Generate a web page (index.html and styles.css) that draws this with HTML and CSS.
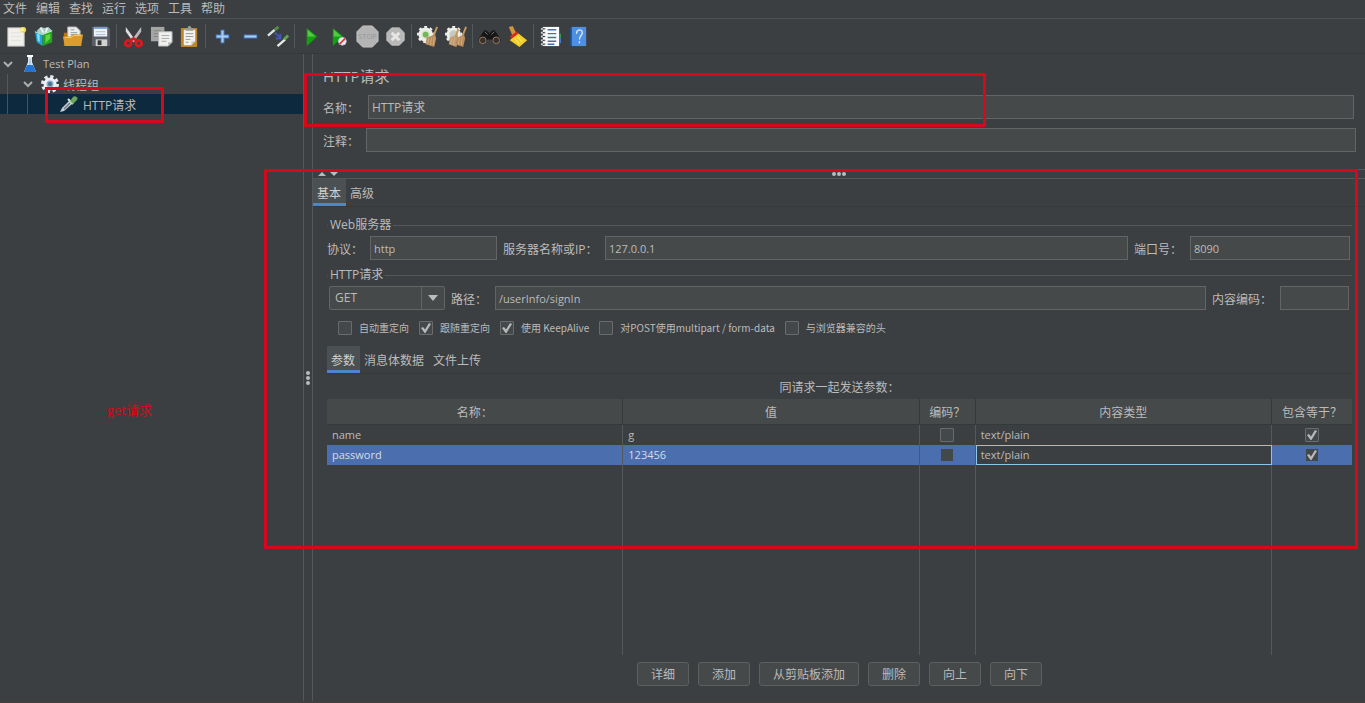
FILE: index.html
```html
<!DOCTYPE html>
<html lang="zh-CN">
<head>
<meta charset="utf-8">
<title>HTTP请求</title>
<link rel="stylesheet" href="styles.css">
</head>
<body>
<div class="app">
  <nav class="menubar">
    <button class="menu">文件</button><button class="menu">编辑</button><button class="menu">查找</button><button class="menu">运行</button><button class="menu">选项</button><button class="menu">工具</button><button class="menu">帮助</button>
  </nav>

  <div class="toolbar">
    <button class="tool" aria-label="新建"><svg viewBox="0 0 24 24"><rect x="3" y="3" width="17" height="19" fill="#f1f0ec" stroke="#c9c8c2"/><path d="M6 8h11M6 12h11M6 16h11" stroke="#e4e3de"/><circle cx="19" cy="5" r="3" fill="#f3dc4c"/><circle cx="18" cy="5" r="1.500" fill="#fff6b0"/></svg></button>
    <button class="tool" aria-label="模板"><svg viewBox="0 0 24 24"><path d="M4 6l4-4 4 1 4-1 4 4-4 4H6z" fill="#a9c9c4"/><path d="M8 3l3 5M15 3l-2 5" stroke="#e9f4f0" stroke-width="2"/><path d="M2 7l8 3v12l-6-4z" fill="#1fa6dd"/><path d="M4 9l3 1v8l-2-2z" fill="#8edcf5"/><path d="M10 10l10-4v12l-10 4z" fill="#25a51f"/><path d="M13 11l5-2v5l-5 5z" fill="#62d443"/><path d="M2 7l8 3 10-4" fill="none" stroke="#c9f0cf"/></svg></button>
    <button class="tool" aria-label="打开"><svg viewBox="0 0 24 24"><path d="M3 8h5l2 3h11v11H3z" fill="#ba7410"/><path d="M7 2h9l4 4v8H7z" fill="#eeeeec" stroke="#aaa"/><path d="M10 5h4M10 8h7M10 10h7" stroke="#8b98a8"/><path d="M2 12h8l2-2h11l-2 12H4z" fill="#dc9c2b"/><path d="M4 13h7l2-2h8" fill="none" stroke="#f8cc65"/></svg></button>
    <button class="tool" aria-label="保存"><svg viewBox="0 0 24 24"><path d="M3 2h17l2 2v18H3z" fill="#585d66"/><rect x="5" y="2" width="14" height="10" fill="#eef4fa"/><path d="M5 3h14" stroke="#7399cf" stroke-width="2"/><path d="M7 7h10M7 10h10" stroke="#a9bdd4"/><rect x="7" y="15" width="12" height="7" fill="#d2d2d0"/><rect x="9" y="16" width="4" height="5" fill="#34373b"/></svg></button>
    <span class="tool-sep"></span>
    <button class="tool" aria-label="剪切"><svg viewBox="0 0 24 24"><path d="M4 2l10 14-2 2L4 7z" fill="#dcdedb"/><path d="M20 2L10 16l2 2 8-11z" fill="#b9bcba"/><g fill="none" stroke="#d81920" stroke-width="3"><ellipse cx="6.500" cy="19" rx="3" ry="3"/><ellipse cx="17.500" cy="19" rx="3" ry="3"/><path d="M9 16l3-2 3 2"/></g></svg></button>
    <button class="tool" aria-label="复制"><svg viewBox="0 0 24 24"><rect x="1" y="2" width="14" height="15" fill="#a5a6a4"/><path d="M4 6h8M4 9h5M4 12h5" stroke="#838584"/><path d="M9 7h14v11l-4 4H9z" fill="#f0f0ee" stroke="#b5b6b5"/><path d="M12 11h8M12 14h8M12 17h5" stroke="#aaa"/><path d="M23 18h-4v4z" fill="#b6b7b4"/></svg></button>
    <button class="tool" aria-label="粘贴"><svg viewBox="0 0 24 24"><rect x="3" y="3" width="17" height="20" rx="1" fill="#bd8629"/><path d="M6 5h12v12l-4 4H6z" fill="#f3f2ef"/><path d="M8 9h8M8 12h8M8 15h5M8 18h3" stroke="#999"/><path d="M8 3h2l1-2h2l1 2h2v3H8z" fill="#999d91"/><path d="M18 17h-4v4z" fill="#c8c8c4"/></svg></button>
    <span class="tool-sep"></span>
    <button class="tool" aria-label="展开"><svg viewBox="0 0 24 24"><path d="M12 5v14M5 12h14" stroke="#4d86d0" stroke-width="4"/><path d="M12 6v12M6 12h12" stroke="#a9ccf5" stroke-width="2"/></svg></button>
    <button class="tool" aria-label="折叠"><svg viewBox="0 0 24 24"><path d="M5 12h14" stroke="#4d86d0" stroke-width="4"/><path d="M6 12h12" stroke="#a9ccf5" stroke-width="2"/></svg></button>
    <button class="tool" aria-label="切换"><svg viewBox="0 0 24 24"><path d="M1 11l7-6" stroke="#dbe5e2" stroke-width="2.500"/><path d="M8 5l4-3" stroke="#538f48" stroke-width="3"/><path d="M11 22l8-7" stroke="#e5eae4" stroke-width="2.500"/><path d="M18 15l4-4" stroke="#62a351" stroke-width="3"/><path d="M8 8l6 5M14 9v5H9" fill="none" stroke="#4256b4" stroke-width="2"/></svg></button>
    <span class="tool-sep"></span>
    <button class="tool" aria-label="启动"><svg viewBox="0 0 24 24"><path d="M7 3l11 9-11 10z" fill="#13a112"/><path d="M8 5l8 7H8z" fill="#54c946"/></svg></button>
    <button class="tool" aria-label="不停顿开始"><svg viewBox="0 0 24 24"><path d="M5 3l11 9-11 10z" fill="#13a112"/><path d="M6 5l8 7H6z" fill="#54c946"/><circle cx="15" cy="17" r="4" fill="#eee" stroke="#bccbe2"/><path d="M12 20l6-6" stroke="#d83f48" stroke-width="2"/></svg></button>
    <button class="tool" aria-label="停止"><svg viewBox="0 0 24 24"><path d="M7 1h10l6 6v10l-6 6H7l-6-6V7z" fill="#b4b4b4" stroke="#c5c5c5"/><text class="stop-word" x="12" y="15" text-anchor="middle">STOP</text></svg></button>
    <button class="tool" aria-label="关闭"><svg viewBox="0 0 24 24"><path d="M8 3h8l5 5v8l-5 5H8l-5-5V8z" fill="#b8b8b8" stroke="#c7c7c7"/><path d="M8 8l8 8M16 8l-8 8" stroke="#e6e6e6" stroke-width="3"/></svg></button>
    <span class="tool-sep"></span>
    <button class="tool" aria-label="清除"><svg viewBox="0 0 24 24"><circle cx="9" cy="10" r="6" fill="#d7e2cf" stroke="#ecefea" stroke-width="3"/><circle cx="9" cy="10" r="8" fill="none" stroke="#f0f0ed" stroke-width="2" stroke-dasharray="3 3"/><circle cx="9" cy="10" r="3" fill="#6fba55"/><path d="M21 2l-4 10" stroke="#c79a62" stroke-width="2"/><path d="M10 13l9-3 1 4-2 9-9-3z" fill="#b88b5b"/><path d="M12 14l-1 6M15 13l-1 8M18 12l-1 9" stroke="#d4b082"/></svg></button>
    <button class="tool" aria-label="清除全部"><svg viewBox="0 0 24 24"><circle cx="9" cy="10" r="6" fill="#c6c9c0" stroke="#ecefea" stroke-width="3"/><circle cx="9" cy="10" r="8" fill="none" stroke="#f0f0ed" stroke-width="2" stroke-dasharray="3 3"/><path d="M14 4l-3 8M22 2l-4 10" stroke="#c79a62" stroke-width="2"/><path d="M5 13l8-3 1 4-2 9-8-3z" fill="#c09a70"/><path d="M13 13l7-3 1 4-2 9-8-3z" fill="#b88b5b"/><path d="M7 13l-1 7M10 12l-1 9M15 13l-1 8M18 12l-1 9" stroke="#d4b082"/></svg></button>
    <span class="tool-sep"></span>
    <button class="tool" aria-label="查找"><svg viewBox="0 0 24 24"><path d="M7 5l4 2 1 3 1-3 4-2 3 4 4 7-7 4-3-5h-4l-3 5-7-4 4-7z" fill="#171717"/><circle cx="5" cy="16" r="3.500" fill="#37312e" stroke="#9f7860"/><circle cx="19" cy="16" r="3.500" fill="#37312e" stroke="#9f7860"/><path d="M7 7l3 3M17 7l-3 3" stroke="#777"/></svg></button>
    <button class="tool" aria-label="重置查找"><svg viewBox="0 0 24 24"><path d="M3 2l4-1 4 8-4 3z" fill="#d3943d"/><path d="M12 8l10 8-8 7-10-7z" fill="#f3ce28"/><path d="M12 12l5 6M9 14l5 6" stroke="#fff080"/><path d="M5 13l7-5" stroke="#d62d1f" stroke-width="3"/></svg></button>
    <span class="tool-sep"></span>
    <button class="tool" aria-label="函数助手"><svg viewBox="0 0 24 24"><rect x="4" y="2" width="17" height="20" fill="#fafafa"/><path d="M9 5h9M9 9h9M9 13h9M9 17h9M9 20h7" stroke="#4670b3" stroke-width="1.500"/><path d="M2 4h5M2 8h5M2 12h5M2 16h5M2 20h5" stroke="#ccc" stroke-width="2"/><path d="M4 4h2M4 8h2M4 12h2M4 16h2M4 20h2" stroke="#222"/><path d="M22 9v5" stroke="#2b9a57" stroke-width="2"/><path d="M22 14v5" stroke="#3d79cf" stroke-width="2"/></svg></button>
    <button class="tool" aria-label="帮助"><svg viewBox="0 0 24 24"><path d="M3 3l3-1v21l-3-2z" fill="#214f88"/><rect x="5" y="2" width="15" height="20" fill="#4d8fe0"/><path d="M10 9c0-5 6-5 6-1 0 3-3 3-3 7M13 17v2" fill="none" stroke="#d4e6ff" stroke-width="1.500"/></svg></button>
  </div>

  <main class="workspace">
    <aside class="sidebar">
      <div class="tree-row"><svg class="chevron" viewBox="0 0 10 10"><path d="M1 3l4 4 4-4"/></svg><svg class="node-icon" viewBox="0 0 18 18"><path d="M7 1h4v6l4 10H3L7 7z" fill="#d9e6f1"/><path d="M6 10h6l3 7H3z" fill="#2274d5"/><path d="M6 1h6" stroke="#fff" stroke-width="2"/><path d="M9 4v6" stroke="#94b4cf"/></svg><span class="latin">Test Plan</span></div>
      <div class="tree-row level-1"><svg class="chevron" viewBox="0 0 10 10"><path d="M1 3l4 4 4-4"/></svg><svg class="node-icon" viewBox="0 0 18 18"><circle cx="9" cy="9" r="7" fill="none" stroke="#e4e9ef" stroke-width="4" stroke-dasharray="3 2.500"/><circle cx="9" cy="9" r="5" fill="#8baacb" stroke="#edf1f4" stroke-width="3"/><circle cx="9" cy="9" r="2" fill="#4f6b8d"/></svg><span class="node-name">线程组</span></div>
      <div class="tree-row level-2 selected"><svg class="node-icon" viewBox="0 0 18 18"><path d="M0 17l2-4 7-7 3 3-8 7z" fill="#c4ced4"/><path d="M4 14l6-6" stroke="#6b7780" stroke-width="1.500"/><path d="M8 4l5 5" stroke="#d6ebce" stroke-width="2"/><path d="M10 6l3-4c2-2 6 1 4 3l-4 4z" fill="#6ba75b"/></svg><span class="node-name">HTTP请求</span></div>
      <p class="note">get请求</p>
    </aside>
    <div class="split-v"><svg viewBox="0 0 4 14"><circle cx="2" cy="2" r="2"/><circle cx="2" cy="7" r="2"/><circle cx="2" cy="12" r="2"/></svg></div>

    <section class="editor">
      <header class="element">
        <h1>HTTP请求</h1>
        <div class="element-row name-row"><label for="name">名称：</label><input class="field" id="name" type="text" value="HTTP请求"></div>
        <div class="element-row"><label for="comment">注释：</label><input class="field" id="comment" type="text"></div>
      </header>
      <div class="split-h"><svg class="arrows" viewBox="0 0 20 6"><path d="M0 5l4-4 4 4zM12 1l4 4 4-4z"/></svg><svg class="dots" viewBox="0 0 14 4"><circle cx="2" cy="2" r="2"/><circle cx="7" cy="2" r="2"/><circle cx="12" cy="2" r="2"/></svg></div>
      <div class="tabs"><button class="tab active">基本</button><button class="tab">高级</button></div>

      <div class="request">
        <fieldset class="group">
          <legend>Web服务器</legend>
          <div class="server-row">
            <label for="protocol">协议：</label><input class="field latin" id="protocol" type="text" value="http">
            <label for="host">服务器名称或IP：</label><input class="field latin" id="host" type="text" value="127.0.0.1">
            <label for="port">端口号：</label><input class="field latin" id="port" type="text" value="8090">
          </div>
        </fieldset>
        <fieldset class="group">
          <legend>HTTP请求</legend>
          <div class="path-row">
            <div class="select-box"><select class="method" aria-label="方法"><option>GET</option><option>POST</option></select><svg viewBox="0 0 10 6"><path d="M0 0h10L5 6z"/></svg></div>
            <label for="path">路径：</label><input class="field latin" id="path" type="text" value="/userInfo/signIn">
            <label for="encoding">内容编码：</label><input class="field latin" id="encoding" type="text">
          </div>
          <div class="options">
            <label><input type="checkbox">自动重定向</label>
            <label><input type="checkbox" checked>跟随重定向</label>
            <label><input type="checkbox" checked>使用 KeepAlive</label>
            <label><input type="checkbox">对POST使用multipart / form-data</label>
            <label><input type="checkbox">与浏览器兼容的头</label>
          </div>
        </fieldset>

        <div class="tabs inner"><button class="tab active">参数</button><button class="tab">消息体数据</button><button class="tab">文件上传</button></div>
        <h2>同请求一起发送参数：</h2>
        <div class="table-area">
          <table>
            <colgroup><col><col><col class="col-encode"><col><col class="col-equals"></colgroup>
            <thead><tr><th>名称：</th><th>值</th><th>编码？</th><th>内容类型</th><th>包含等于？</th></tr></thead>
            <tbody>
              <tr><td>name</td><td>g</td><td class="check"><input type="checkbox" aria-label="编码"></td><td>text/plain</td><td class="check"><input type="checkbox" aria-label="包含等于" checked></td></tr>
              <tr class="picked"><td>password</td><td>123456</td><td class="check"><input type="checkbox" aria-label="编码"></td><td class="focused">text/plain</td><td class="check"><input type="checkbox" aria-label="包含等于" checked></td></tr>
              <tr class="filler"><td></td><td></td><td></td><td></td><td></td></tr>
            </tbody>
          </table>
        </div>
        <div class="actions"><button>详细</button><button>添加</button><button>从剪贴板添加</button><button>删除</button><button>向上</button><button>向下</button></div>
      </div>
    </section>
  </main>

  <div class="mark mark-tree"></div>
  <div class="mark mark-name"></div>
  <div class="mark mark-request"></div>
</div>
</body>
</html>
```
FILE: styles.css
```css
* { box-sizing: border-box; }

body {
  margin: 0;
  background: #3c3f41;
  color: #bbbbbb;
  font: 12px/16px "Open Sans", "Noto Sans CJK SC", sans-serif;
}

button, input, select { font: inherit; color: inherit; margin: 0; }
button { background: none; border: 0; padding: 0; }

.app {
  position: relative;
  display: flex;
  flex-direction: column;
  min-height: 100vh;
  border-bottom: 2px solid #443d3e;
}

.menubar {
  display: flex;
  gap: 9px;
  height: 19px;
  padding: 0 3px;
  border-bottom: 1px solid #515151;
}

.toolbar {
  display: flex;
  align-items: center;
  height: 35px;
  padding: 0 2px;
  border-bottom: 1px solid #36393a;
}
.tool { display: flex; justify-content: center; width: 28px; }
.tool svg { width: 23px; height: 23px; }
.tool-sep { width: 1px; height: 24px; margin: 0 2px; background: #55585a; }
.stop-word { font-size: 8px; fill: #989898; }

.workspace { display: flex; flex: 1; }

.sidebar { width: 303px; }
.tree-row { display: flex; align-items: center; height: 20px; padding-left: 3px; }
.level-1 {
  padding-left: 23px;
  background: linear-gradient(#55585a, #55585a) 7px 0 / 1px 100% no-repeat;
}
.level-2 { padding-left: 60px; }
.selected {
  background:
    linear-gradient(#45535e, #45535e) 7px 0 / 1px 100% no-repeat,
    linear-gradient(#45535e, #45535e) 27px 0 / 1px 100% no-repeat,
    #0d293e;
}
.chevron { width: 10px; height: 10px; margin-right: 8px; fill: none; stroke: #adadad; stroke-width: 2; }
.node-icon { width: 18px; height: 18px; margin-right: 4px; }
.node-name { padding-top: 3px; }
.level-2 .node-icon { margin-right: 5px; }
.note { margin: 288px 0 0 107px; color: #d5091b; font-size: 13px; }

.latin, td { font-size: 11px; }

.split-v {
  display: flex;
  align-items: center;
  justify-content: center;
  width: 10px;
  border: solid #55585a;
  border-width: 0 1px;
}
.split-v svg { width: 4px; height: 14px; fill: #bbbbbb; }

.editor { display: flex; flex: 1; flex-direction: column; min-width: 0; }
.element { display: flex; flex-direction: column; gap: 9px; padding: 12px 9px 17px 10px; }
h1 { margin: 0; font-size: 15px; line-height: 20px; font-weight: 400; }
.element-row { display: flex; align-items: center; }
.element-row label { width: 43px; }
.name-row { padding-right: 2px; }
.name-row label { width: 45px; }
.element-row .field { flex: 1; }
.element-row label, .server-row label, .path-row label { padding-top: 3px; }

.field {
  min-width: 0;
  height: 24px;
  padding: 0 3px;
  background: #45494a;
  border: 1px solid #646464;
  border-radius: 0;
}

.split-h {
  display: grid;
  grid-template-columns: 1fr auto 1fr;
  align-items: center;
  height: 10px;
  border: solid #55585a;
  border-width: 1px 0;
}
.arrows { width: 20px; height: 6px; margin-left: 5px; fill: #bbbbbb; }
.dots { width: 14px; height: 4px; fill: #bbbbbb; }

.tabs { display: flex; height: 28px; border-bottom: 1px solid #36393a; }
.tab { padding: 5px 5px 0 4px; border-bottom: 3px solid transparent; }
.tab.active { background: #4b5052; border-bottom-color: #4a88c7; color: #d0d0d0; }
.inner { margin-top: 3px; }

.request { display: flex; flex: 1; flex-direction: column; padding: 10px 13px 15px 14px; }

.group { min-width: 0; margin: 0; padding: 3px 2px 7px 0; border: 0; border-top: 1px solid #55585a; }
.group legend { margin-left: 1px; padding: 0 2px; }
.server-row, .path-row { display: grid; align-items: center; }
.server-row { grid-template-columns: 43px 127px 108px 1fr 62px 160px; }
.path-row { grid-template-columns: 116px 50px 1fr 74px 69px; padding: 0 1px 0 2px; }
.server-row label + input ~ label, .path-row label { padding-left: 6px; }

.select-box { position: relative; }
.method {
  display: block;
  appearance: none;
  width: 100%;
  height: 24px;
  padding: 0 5px;
  border: 1px solid #646464;
  border-radius: 2px;
  background: linear-gradient(#646464, #646464) right 22px top 0 / 1px 100% no-repeat, #45494a;
}
.select-box svg { position: absolute; right: 7px; top: 9px; width: 10px; height: 6px; fill: #bbbbbb; pointer-events: none; }

.options { display: flex; gap: 10px; padding: 10px 0 0 11px; font: 10px/16px "Noto Sans CJK SC", sans-serif; }
.options label { display: flex; align-items: center; gap: 7px; }

input[type="checkbox"] {
  display: grid;
  place-items: center;
  appearance: none;
  width: 14px;
  height: 14px;
  background: #43494a;
  border: 1px solid #6b6b6b;
  border-radius: 1px;
}
input[type="checkbox"]:checked::before {
  content: "";
  width: 10px;
  height: 10px;
  background: #b8b8b8;
  clip-path: polygon(0 50%, 20% 40%, 40% 65%, 80% 0, 100% 10%, 45% 100%, 35% 100%);
}

h2 { margin: 6px 0 3px; font-size: 12px; line-height: 16px; font-weight: 400; text-align: center; }

.table-area { display: grid; flex: 1; }
table { width: 100%; height: 100%; table-layout: fixed; border-collapse: separate; border-spacing: 0; }
.col-encode { width: 56px; }
.col-equals { width: 80px; }
th { height: 26px; padding: 3px 0 0; background: #45494a; font-weight: 400; border-bottom: 1px solid #36393a; border-right: 1px solid #36393a; }
td { height: 20px; padding: 0 5px; line-height: 16px; border-right: 1px solid #55585a; }
th:last-child, td:last-child { border-right: 0; }
td.check { padding: 0; }
td.check input { margin: 0 auto; }
.picked td { background: #4b6eaf; color: #d6dce6; }
.picked td.focused { padding: 0 4px; background: #3c3f41; color: #bbbbbb; border: 1px solid #8fc6e8; }
.picked input[type="checkbox"] { border-color: #4b6eaf; }
.filler td { height: auto; }

.actions { display: flex; justify-content: center; gap: 9px; padding-top: 7px; }
.actions button {
  height: 24px;
  padding: 2px 13px 0;
  border: 1px solid #5e6060;
  border-radius: 3px;
  background: #45494a;
}

.mark { position: absolute; border: 3px solid #d5091b; pointer-events: none; }
.mark-tree { left: 45px; top: 87px; width: 119px; height: 36px; }
.mark-name { left: 304px; top: 73px; width: 682px; height: 54px; }
.mark-request { left: 264px; right: 7px; top: 169px; height: 380px; }
```
